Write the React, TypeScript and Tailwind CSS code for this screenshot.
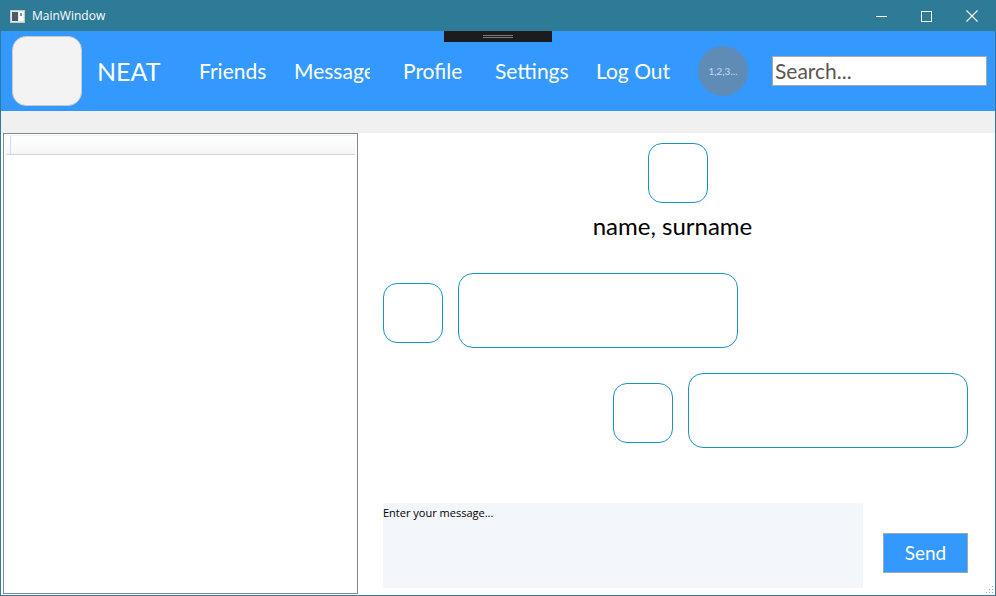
import React from 'react';

const navItems = [
  { label: 'Friends', box: 'w-[95px]' },
  { label: 'Message', box: 'w-[109px]', clip: 'w-[76px]' },
  { label: 'Profile', box: 'w-[92px]' },
  { label: 'Settings', box: 'w-[101px]' },
  { label: 'Log Out', box: 'w-[102px]' },
];

const TitleBar: React.FC = () => (
  <div className="h-[30px] flex items-center bg-[#2d7b97] text-white">
    <svg className="ml-[9px] w-[15px] h-[13px]" viewBox="0 0 15 13">
      <rect x="0.5" y="0.5" width="14" height="12" fill="#e8e8e8" stroke="#c8c8c8" />
      <rect x="2" y="2" width="6" height="9" fill="#4a5a66" />
      <rect x="9" y="2" width="4" height="9" fill="#ffffff" />
      <rect x="10" y="3" width="2" height="3" fill="#7a8a96" />
    </svg>
    <span className="ml-[7px] text-[12px] leading-[16px] font-['Open_Sans',sans-serif]">MainWindow</span>
    <div className="ml-auto flex items-center h-full">
      <div className="w-[45px] h-full flex items-center justify-center">
        <svg width="11" height="11" viewBox="0 0 11 11">
          <line x1="0" y1="5.5" x2="11" y2="5.5" stroke="white" strokeWidth="1" />
        </svg>
      </div>
      <div className="w-[45px] h-full flex items-center justify-center">
        <svg width="11" height="11" viewBox="0 0 11 11">
          <rect x="0.5" y="0.5" width="10" height="10" fill="none" stroke="white" strokeWidth="1" />
        </svg>
      </div>
      <div className="w-[46px] h-full flex items-center justify-center">
        <svg width="12" height="12" viewBox="0 0 12 12">
          <path d="M0.5 0.5 L11.5 11.5 M11.5 0.5 L0.5 11.5" stroke="white" strokeWidth="1.1" />
        </svg>
      </div>
    </div>
  </div>
);

const Header: React.FC = () => (
  <div className="relative h-[80px] bg-[#3399ff] flex items-center font-['Lato',sans-serif] text-white">
    <div className="absolute left-[443px] top-0 w-[108px] h-[11px] bg-[#1c1c1c] flex flex-col items-center justify-center gap-[1px]">
      <div className="w-[30px] h-[1px] bg-[#7a7a7a]" />
      <div className="w-[30px] h-[1px] bg-[#7a7a7a]" />
    </div>
    <div className="ml-[11px] w-[70px] h-[70px] rounded-[14px] bg-[#f3f3f3] border border-[#c9c9c9]" />
    <div className="ml-[15px] w-[102px] text-[25px] leading-[30px]">NEAT</div>
    {navItems.map((item) => (
      <div key={item.label} className={`${item.box} text-[21px] leading-[28px]`}>
        <div className={`${item.clip ?? ''} overflow-hidden whitespace-nowrap`}>{item.label}</div>
      </div>
    ))}
    <div className="w-[50px] h-[50px] rounded-full bg-[#5f8cb6] flex items-center justify-center text-[10px] leading-[12px] text-[#c2dbf3]">
      1,2,3...
    </div>
    <div className="ml-[24px] w-[215px] h-[30px] bg-white border border-[#a9a9a9] flex items-center pl-[2px] text-[21px] text-[#5b5450] leading-[26px]">
      Search...
    </div>
  </div>
);

const Box: React.FC<{ className: string }> = ({ className }) => (
  <div className={`border border-[#1a92c2] ${className}`} />
);

export default function App() {
  return (
    <div className="w-[996px] h-[596px] border border-[#2d7b97] flex flex-col bg-white overflow-hidden">
      <TitleBar />
      <Header />
      <div className="h-[22px] bg-[#f0f0f0]" />
      <div className="flex-1 flex min-h-0">
        <div className="ml-[2px] mb-[1px] w-[355px] border border-[#828790] bg-white pt-[1px] px-[2px]">
          <div className="h-[20px] flex bg-gradient-to-b from-white to-[#f5f7f7] border-b border-[#d5d5d5] border-t border-t-[#f0f2f4]">
            <div className="ml-[4px] w-[1px] h-full bg-[#dcdcdc]" />
          </div>
        </div>
        <div className="relative flex-1 flex flex-col font-['Lato',sans-serif]">
          <Box className="mt-[10px] ml-[290px] w-[60px] h-[60px] rounded-[14px]" />
          <div className="mt-[9px] pr-[8px] text-center text-[24px] leading-[28px] text-black">name, surname</div>
          <div className="mt-[33px] ml-[25px] flex items-center gap-[15px]">
            <Box className="w-[60px] h-[60px] mt-[5px] rounded-[14px]" />
            <Box className="w-[280px] h-[75px] rounded-[15px]" />
          </div>
          <div className="mt-[25px] ml-[255px] flex items-center gap-[15px]">
            <Box className="w-[60px] h-[60px] mt-[5px] rounded-[14px]" />
            <Box className="w-[280px] h-[75px] rounded-[15px]" />
          </div>
          <div className="mt-[55px] ml-[25px] flex items-start">
            <div className="w-[480px] h-[85px] bg-[#f3f6fa] pt-[3px] text-[11px] text-black font-['Open_Sans',sans-serif] leading-[14px]">
              Enter your message...
            </div>
            <div className="ml-[20px] mt-[30px] w-[85px] h-[40px] bg-[#3399ff] border border-[#a0a8b0] flex items-center justify-center text-white text-[19px] leading-[24px]">
              Send
            </div>
          </div>
          <svg className="absolute right-[1px] bottom-[1px]" width="10" height="10" viewBox="0 0 10 10">
            {[[8, 2], [8, 5], [5, 5], [8, 8], [5, 8], [2, 8]].map(([x, y]) => (
              <rect key={`${x}-${y}`} x={x} y={y} width="1" height="1" fill="#a0a0a0" />
            ))}
          </svg>
        </div>
      </div>
    </div>
  );
}
